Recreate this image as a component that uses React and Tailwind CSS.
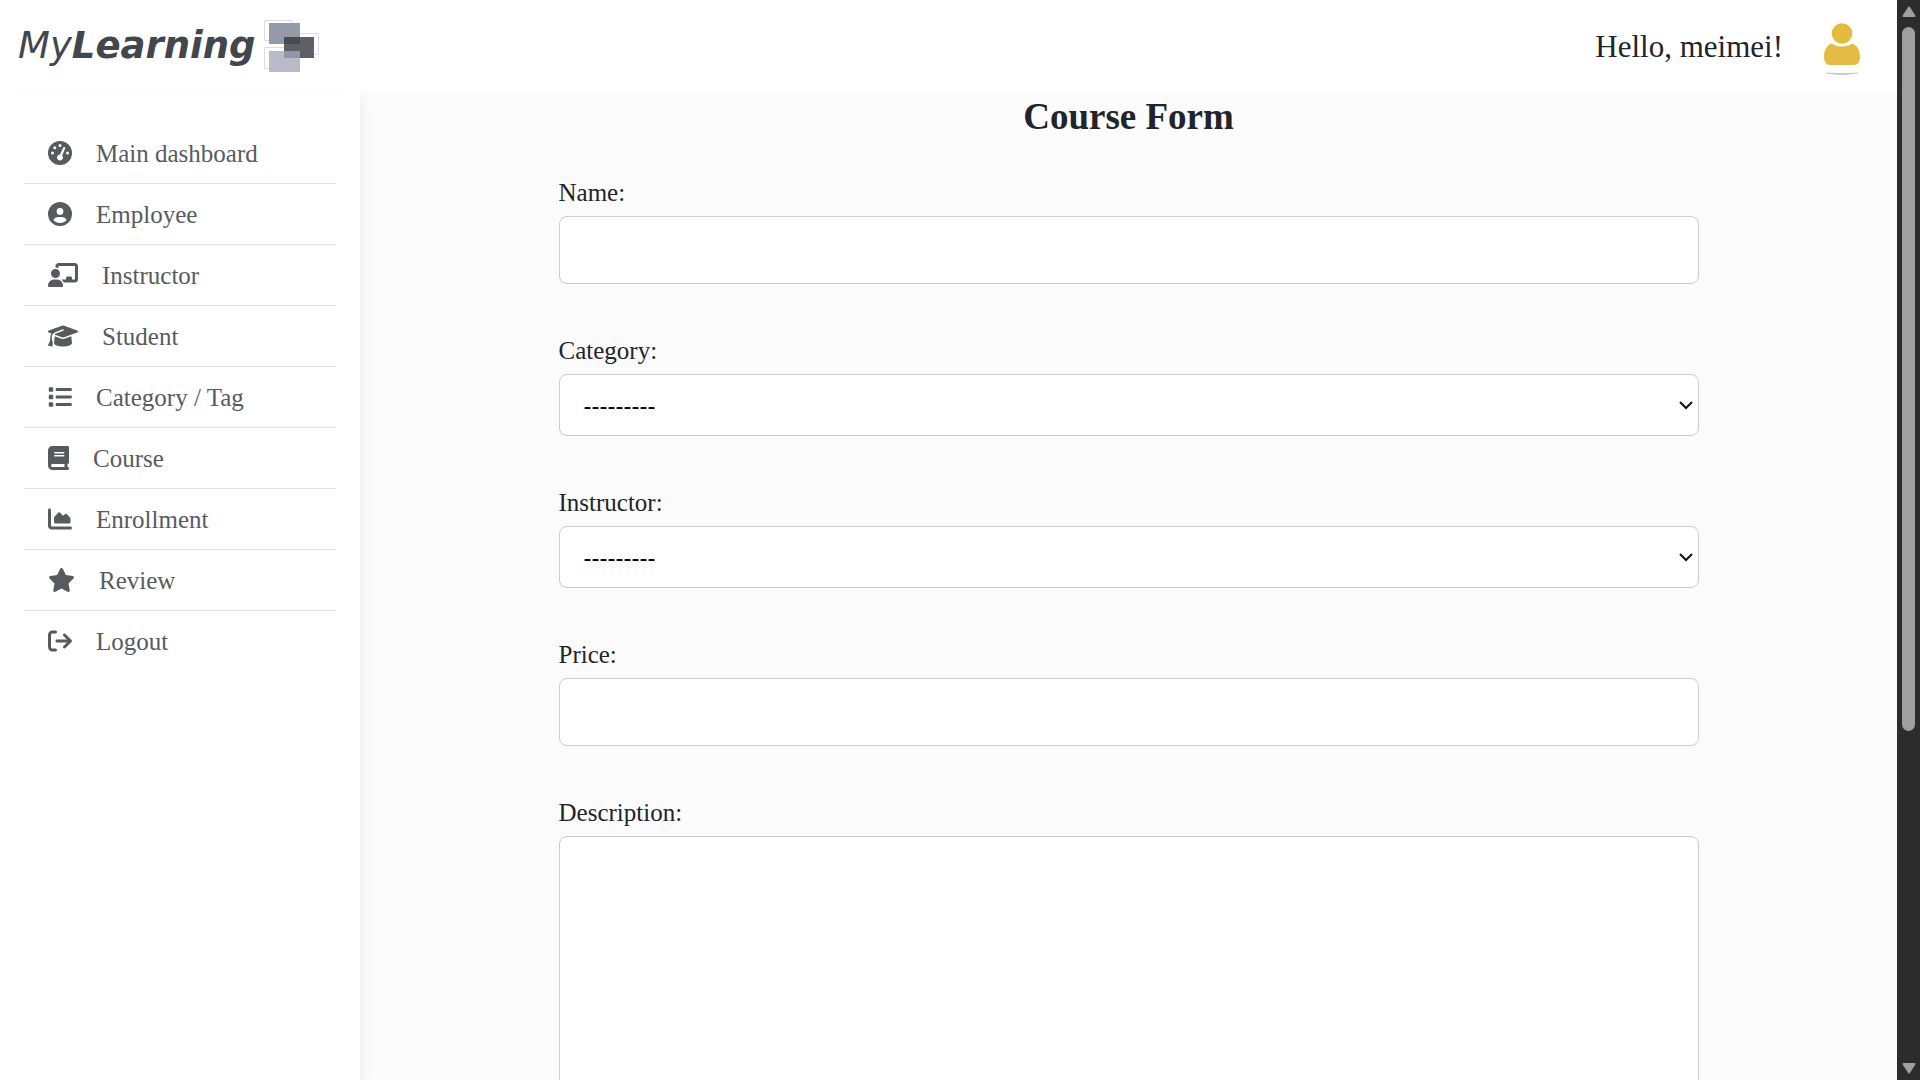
import {
  FaGaugeHigh,
  FaCircleUser,
  FaChalkboardUser,
  FaGraduationCap,
  FaList,
  FaBook,
  FaChartArea,
  FaStar,
  FaArrowRightFromBracket,
} from "react-icons/fa6";

const NAV = [
  { label: "Main dashboard", Icon: FaGaugeHigh, size: "w-6" },
  { label: "Employee", Icon: FaCircleUser, size: "w-6" },
  { label: "Instructor", Icon: FaChalkboardUser, size: "w-[30px]" },
  { label: "Student", Icon: FaGraduationCap, size: "w-[30px]" },
  { label: "Category / Tag", Icon: FaList, size: "w-6" },
  { label: "Course", Icon: FaBook, size: "w-[21px]" },
  { label: "Enrollment", Icon: FaChartArea, size: "w-6" },
  { label: "Review", Icon: FaStar, size: "w-[27px]" },
  { label: "Logout", Icon: FaArrowRightFromBracket, size: "w-6" },
];

const FIELDS = [
  { id: "name", label: "Name:", type: "text" },
  { id: "category", label: "Category:", type: "select" },
  { id: "instructor", label: "Instructor:", type: "select" },
  { id: "price", label: "Price:", type: "text" },
  { id: "description", label: "Description:", type: "textarea" },
];

function Logo() {
  return (
    <a href="#home" className="flex items-center gap-2 font-['DejaVu_Sans',sans-serif] text-[#42464d]">
      <span className="flex items-baseline text-[37px] italic leading-10">
        <span>My</span>
        <span className="font-bold">Learning</span>
      </span>
      <svg width="56" height="52" viewBox="0 0 56 52" aria-hidden="true">
        <g fill="none" stroke="#dcdde0">
          <path d="M5 20.500H0.500V0.500H28.500V3" />
          <path d="M36 13.500H54.500V34.500H50" />
          <path d="M5 48.500H0.500V27.500H20" />
        </g>
        <rect x="5" y="3" width="31" height="21" fill="#949aa7" />
        <rect x="5" y="31" width="31" height="21" fill="#bbbac8" />
        <path d="M20 17H50V38H36V31H20Z" fill="#5d6166" />
        <rect x="20" y="17" width="16" height="7" fill="#474b54" />
        <rect x="20" y="31" width="16" height="7" fill="#9496a8" />
      </svg>
    </a>
  );
}

function Avatar() {
  return (
    <svg width="38" height="58" viewBox="0 -6 38 58" role="img" aria-label="Profile">
      <circle cx="19" cy="10.500" r="10.300" fill="#e3bb3f" />
      <path
        d="M8.500 20.500C11.500 22.300 14.500 23.500 19 23.500S26.500 22.300 29.500 20.500C34.500 22.500 37 28 37 33.500C37 39 35 42 31 42H7C3 42 1 39 1 33.500C1 28 3.500 22.500 8.500 20.500Z"
        fill="#e3bb45"
      />
      <path d="M3 50Q19 53 35 50Q19 51 3 50Z" fill="#999999" stroke="#c4c4c4" strokeWidth="0.500" />
    </svg>
  );
}

function Field({ id, label, type }) {
  const box = "w-full rounded-lg border border-[#cccccc] bg-white px-6 text-2xl text-black";
  return (
    <div className="flex flex-col">
      <label htmlFor={id} className="mb-[7px] pt-px text-[25px] leading-8">
        {label}
      </label>
      {type === "text" && <input id={id} type="text" className={`${box} h-[68px]`} />}
      {type === "select" && (
        <div className="relative">
          <select id={id} className={`${box} block h-[62px] appearance-none pt-0.5 font-['Liberation_Sans',sans-serif]`}>
            <option>---------</option>
          </select>
          <svg
            width="14"
            height="9"
            viewBox="0 0 14 9"
            className="pointer-events-none absolute right-1.5 top-[27px]"
            aria-hidden="true"
          >
            <path d="M1 1L7 7L13 1" fill="none" stroke="#111111" strokeWidth="2" />
          </svg>
        </div>
      )}
      {type === "textarea" && <textarea id={id} rows="10" className={`${box} resize-none py-4`} />}
    </div>
  );
}

function ScrollBar() {
  return (
    <div className="flex w-[23px] shrink-0 flex-col items-center bg-[#2c2c2c] py-1.5" aria-hidden="true">
      <svg width="14" height="12" viewBox="0 0 14 12" className="mb-[9px] shrink-0">
        <path d="M7 1.500L12.500 10H1.500Z" fill="#9f9f9f" stroke="#9f9f9f" strokeWidth="2" strokeLinejoin="round" />
      </svg>
      <div className="flex w-[13px] flex-1 flex-col">
        <div className="h-[68%] rounded-full bg-[#9f9f9f]" />
      </div>
      <svg width="14" height="12" viewBox="0 0 14 12" className="shrink-0">
        <path d="M7 10.500L12.500 2H1.500Z" fill="#9f9f9f" stroke="#9f9f9f" strokeWidth="2" strokeLinejoin="round" />
      </svg>
    </div>
  );
}

export default function App() {
  return (
    <div className="flex h-screen overflow-hidden bg-white font-['Liberation_Serif',serif] text-[#212529]">
      <div className="flex min-w-0 flex-1 flex-col">
        <header className="flex h-[92px] shrink-0 items-center justify-between pl-[18px] pr-9">
          <Logo />
          <div className="flex items-center gap-10">
            <span className="pt-0.5 text-[31px] leading-9">Hello, meimei!</span>
            <Avatar />
          </div>
        </header>
        <div className="flex min-h-0 flex-1">
          <nav className="relative w-[360px] shrink-0 bg-white px-6 pt-[31px] shadow-[0_8px_12px_rgba(0,0,0,0.09)]">
            <ul className="divide-y divide-[#dee2e6]">
              {NAV.map(({ label, Icon, size }) => (
                <li key={label}>
                  <a href="#section" className="flex h-[60px] items-center gap-6 px-6 text-[25px] text-[#575b5f]">
                    <Icon className={`h-6 shrink-0 ${size}`} />
                    <span className="pt-0.5">{label}</span>
                  </a>
                </li>
              ))}
            </ul>
          </nav>
          <main className="min-w-0 flex-1 overflow-hidden bg-[#fbfbfb] px-8">
            <form className="mx-auto flex max-w-[1140px] flex-col">
              <h1 className="mb-[34px] text-center text-[37px] font-bold leading-[50px]">Course Form</h1>
              <div className="flex flex-col gap-[50px]">
                {FIELDS.map((f) => (
                  <Field key={f.id} {...f} />
                ))}
              </div>
            </form>
          </main>
        </div>
      </div>
      <ScrollBar />
    </div>
  );
}
